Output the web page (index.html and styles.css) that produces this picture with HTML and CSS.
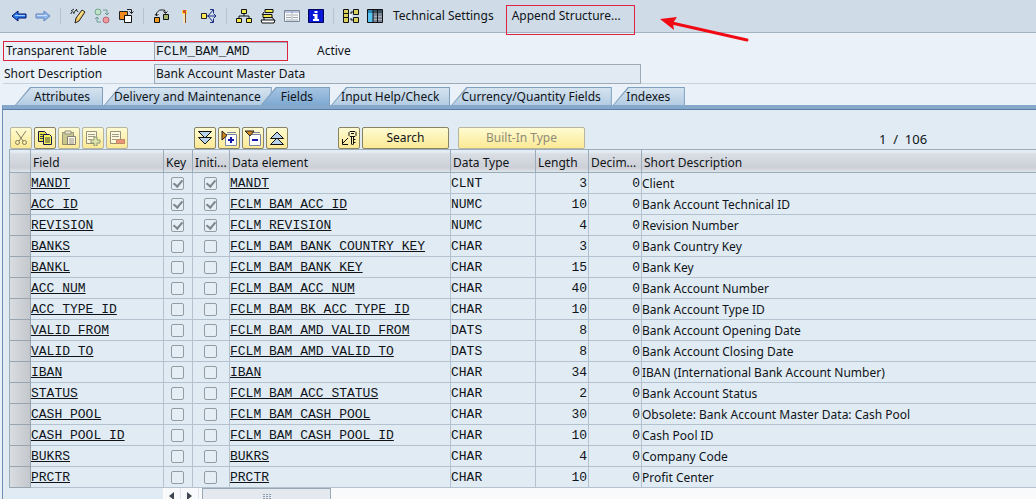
FILE: index.html
```html
<!DOCTYPE html>
<html lang="en">
<head>
<meta charset="utf-8">
<title>Transparent Table FCLM_BAM_AMD</title>
<link rel="stylesheet" href="styles.css">
</head>
<body>
<header class="toolbar">
  <button class="icon-btn" aria-label="Back"><svg viewBox="0 0 16 16"><path d="M1 8l6-5v3h8v4H7v3z" fill="#2f7be8" stroke="#00106b"/><path d="M4 7.500h10" stroke="#9fd0ff"/></svg></button>
  <button class="icon-btn" aria-label="Forward"><svg viewBox="0 0 16 16"><path d="M15 8L9 3v3H1v4h8v3z" fill="#8fb8ee" stroke="#6683bd"/><path d="M2 7.500h10" stroke="#c9e1ff"/></svg></button>
  <span class="sep"></span>
  <button class="icon-btn" aria-label="Display or change"><svg viewBox="0 0 16 16"><path d="M6 10l6-8 3 2-6 9-4 2z" fill="#f4c860" stroke="#222"/><path d="M8 10l5-7" stroke="#fff3b0"/><path d="M1 6c0-3 3-3 3 0M4 5c0-3 4-3 4-1M1 3l3-2M5 3l2-2" fill="none" stroke="#222"/></svg></button>
  <button class="icon-btn" aria-label="Active or inactive"><svg viewBox="0 0 16 16"><circle cx="4" cy="4" r="3" fill="#bfe3c9" stroke="#6fa68a"/><circle cx="12" cy="12" r="3" fill="#ef9aa0" stroke="#b56570"/><path d="M9 2h4v4m-2-1l2 2 2-2M7 14H3v-4m-2 1l2-2 2 2" fill="none" stroke="#6c9c91"/></svg></button>
  <button class="icon-btn" aria-label="Other object"><svg viewBox="0 0 16 16"><path d="M1.500 3.500h8v8h-8z" fill="#f08a1c" stroke="#222"/><path d="M6.500 7.500h7v7h-7z" fill="#fff" stroke="#111"/><path d="M9 1.500h4.500v4m-2-2l2 2 2-2" fill="none" stroke="#222"/></svg></button>
  <span class="sep"></span>
  <button class="icon-btn" aria-label="Check"><svg viewBox="0 0 16 16"><path d="M1.500 9.500h5v5h-5z" fill="#f49a20" stroke="#111"/><path d="M10.500 6.500h5v5h-5z" fill="#a8b56b" stroke="#111"/><path d="M3.500 8V5l3-3h5l1 3M2 6l1.500 2L5.500 6M10.500 3.500l2 2 2-2" fill="none" stroke="#222"/></svg></button>
  <button class="icon-btn" aria-label="Activate"><svg viewBox="0 0 16 16"><path d="M5 2h5v4H5z" fill="#ffd84a"/><path d="M6 2h3v3H6z" fill="#d94c28"/><path d="M6 6h3v9H6z" fill="#f6e5b8"/><path d="M8.500 5v10" stroke="#8b4a22"/></svg></button>
  <button class="icon-btn" aria-label="Where-used list"><svg viewBox="0 0 16 16"><path d="M.5 5.500h5v5h-5z" fill="#ffe95c" stroke="#222"/><path d="M6 8h9M7 8l5-6M7 8l5 6M12.500 5.500L15 8l-2.500 2.500M9 1.500h3.500V5M9 14.500h3.500V11" fill="none" stroke="#1d2d87"/></svg></button>
  <span class="sep"></span>
  <button class="icon-btn" aria-label="Hierarchy"><svg viewBox="0 0 16 16"><g fill="#f2e94a" stroke="#111"><path d="M5.500 1.500h5v4h-5zM.5 10.500h5v4h-5zM10.500 10.500h5v4h-5z"/></g><path d="M8 6v2M3 10V8h10v2" fill="none" stroke="#111"/></svg></button>
  <button class="icon-btn" aria-label="Append list"><svg viewBox="0 0 16 16"><g fill="#f2e94a" stroke="#111"><path d="M5 1.500h8v3H5zM3 6.500h9v3H3z"/><path d="M1 12h14l-1 3H2z" fill="#fff"/></g><path d="M4 4l-2 3M12 9l2 3M4 9v3" stroke="#111"/></svg></button>
  <button class="icon-btn" aria-label="Contents"><svg viewBox="0 0 16 16"><path d="M.5 2.500h15v11H.5z" fill="#fff" stroke="#7a8796"/><path d="M1 3h14v2H1z" fill="#b7c2e3"/><path d="M8 3v10M2 7h5m2 0h5M2 9.500h5m2 0h5M2 12h5m2 0h5" stroke="#9ba6ae"/></svg></button>
  <button class="icon-btn" aria-label="Information"><svg viewBox="0 0 16 16"><path d="M.5 1.500h15v13H.5z" fill="#0719d4" stroke="#00005e"/><path d="M6.500 3h3v2h-3zM5 6h4.500v5H11v2H5v-2h1.500V8H5z" fill="#fff"/></svg></button>
  <span class="sep"></span>
  <button class="icon-btn" aria-label="Graphic"><svg viewBox="0 0 16 16"><g fill="#d9d25c" stroke="#111"><path d="M.5 1.500h5v13h-5zM10.500 1.500h5v5h-5zM10.500 9.500h5v5h-5z"/></g><path d="M1 5.500h4M1 9.500h4M8 4h2M8 12h2M8 4v8" fill="none" stroke="#111"/><path d="M6 6h3v4H6z" fill="#e8f0ff"/></svg></button>
  <button class="icon-btn" aria-label="Table view"><svg viewBox="0 0 16 16"><path d="M.5 1.500h15v13H.5z" fill="#7a8693" stroke="#111"/><path d="M1 2h5v12H1z" fill="#5ac4f2"/><path d="M6 2h9v3H6z" fill="#39505f"/><path d="M1 2h5v3H1z" fill="#2a86b5"/><path d="M6 2v12M10.500 2v12" stroke="#111"/><path d="M7 8.500h3m1 0h4M7 11.500h3m1 0h4" stroke="#a9b3bd"/></svg></button>
  <button class="text-btn">Technical Settings</button>
  <button class="text-btn marked">Append Structure...</button>
  <svg class="arrow" viewBox="0 0 92 28" aria-hidden="true"><path d="M12 7l75 17" stroke="#f00a14" stroke-width="3" stroke-linecap="round"/><path d="M0 3l17-2-4 6 1 7z" fill="#f00a14"/></svg>
</header>
<main>
  <section class="details">
    <div class="detail framed">
      <label class="caption" for="table">Transparent Table</label>
      <input class="name mono" id="table" value="FCLM_BAM_AMD" readonly>
    </div>
    <span class="status">Active</span>
    <div class="detail second">
      <label class="caption" for="description">Short Description</label>
      <input class="description" id="description" value="Bank Account Master Data" readonly>
    </div>
  </section>
  <nav class="tabs">
    <button class="tab first"><span>Attributes</span></button>
    <button class="tab"><span>Delivery and Maintenance</span></button>
    <button class="tab selected"><span>Fields</span></button>
    <button class="tab"><span>Input Help/Check</span></button>
    <button class="tab"><span>Currency/Quantity Fields</span></button>
    <button class="tab"><span>Indexes</span></button>
  </nav>
  <section class="panel">
    <div class="actions">
      <div class="group edit">
        <button class="tool off" aria-label="Cut"><svg viewBox="0 0 16 16"><path d="M3 1l7 10M13 1L6 11" stroke="#222"/><circle cx="4.500" cy="12.500" r="2" fill="none" stroke="#222"/><circle cx="11.500" cy="12.500" r="2" fill="none" stroke="#222"/></svg></button>
        <button class="tool" aria-label="Copy"><svg viewBox="0 0 16 16"><path d="M1.500 1.500h6l2 2v8h-8z" fill="#e7e843" stroke="#15154d"/><path d="M6.500 4.500h6l2 2v8h-8z" fill="#f5f458" stroke="#15154d"/><path d="M3 4.500h3M3 6.500h3M3 8.500h3M8 8h5M8 10h5M8 12h5" stroke="#444"/></svg></button>
        <button class="tool off" aria-label="Paste"><svg viewBox="0 0 16 16"><path d="M1.500 2.500h11v12h-11z" fill="#9fa574" stroke="#444"/><path d="M4 1h6v3H4z" fill="#ddd" stroke="#444"/><path d="M6.500 6.500h8v8h-8z" fill="#fff" stroke="#224"/><path d="M8 9h5M8 11h5M8 13h5" stroke="#448"/></svg></button>
        <button class="tool off" aria-label="Insert row"><svg viewBox="0 0 16 16"><path d="M1.500 1.500h10v12h-10z" fill="#fff" stroke="#444"/><path d="M3 4.500h7M3 6.500h7M3 9.500h4" stroke="#555"/><path d="M9 7h3v3h3v3h-3v3H9v-3H6v-3h3z" fill="#c5dcb0" stroke="#354"/></svg></button>
        <button class="tool off" aria-label="Delete row"><svg viewBox="0 0 16 16"><path d="M1.500 1.500h10v12h-10z" fill="#fff" stroke="#444"/><path d="M3 4.500h7M3 6.500h7M3 9.500h4" stroke="#555"/><path d="M7.500 9.500h8v4h-8z" fill="#d9504d" stroke="#943232"/></svg></button>
      </div>
      <div class="group expand">
        <button class="tool" aria-label="Expand all"><svg viewBox="0 0 16 16"><path d="M1.500 1.500h13L8 8zM1.500 7.500h13L8 14z" fill="#b9d2ec" stroke="#111"/></svg></button>
        <button class="tool" aria-label="Expand"><svg viewBox="0 0 16 16"><path d="M4.500 4.500h11v11h-11zM6 2.500h9" fill="#fff" stroke="#7785a8"/><path d="M1 1v9l5-4.500z" fill="#d48618" stroke="#222"/><path d="M7 10h6M10 7v6" stroke="#1717a8" stroke-width="2"/></svg></button>
        <button class="tool" aria-label="Collapse"><svg viewBox="0 0 16 16"><path d="M4.500 4.500h11v11h-11zM8 2.500h7" fill="#fff" stroke="#7785a8"/><path d="M0 1h9L5 6z" fill="#d48618" stroke="#222"/><path d="M7 10h6" stroke="#1717a8" stroke-width="2"/></svg></button>
        <button class="tool" aria-label="Collapse all"><svg viewBox="0 0 16 16"><path d="M1.500 8.500L8 2l6.500 6.500zM1.500 14.500L8 8l6.500 6.500z" fill="#b9d2ec" stroke="#111"/></svg></button>
      </div>
      <div class="group find">
        <button class="tool" aria-label="Foreign keys"><svg viewBox="0 0 16 16"><path d="M9 1.500h5l1 1v3l-1 1H9l-1-1v-3zM10 3.500h3M10.500 7v7l1 1 1-1V7M13 9.500h1.500M13 12.500h1.500M7 8l-6 6M1.500 9v5.500H7" fill="none" stroke="#111"/></svg></button>
        <button class="wide search">Search</button>
        <button class="wide type" disabled>Built-In Type</button>
      </div>
      <output class="counter">1 &nbsp;/ &nbsp;106</output>
    </div>
    <table class="grid">
      <colgroup><col class="c-sel"><col class="c-field"><col class="c-key"><col class="c-init"><col class="c-elem"><col class="c-type"><col class="c-len"><col class="c-dec"><col></colgroup>
      <thead><tr><th></th><th>Field</th><th>Key</th><th>Initi...</th><th>Data element</th><th>Data Type</th><th>Length</th><th>Decim...</th><th>Short Description</th></tr></thead>
      <tbody>
        <tr><th></th><td><a href="#">MANDT</a></td><td><input type="checkbox" aria-label="Key" checked></td><td><input type="checkbox" aria-label="Initial" checked></td><td><a href="#">MANDT</a></td><td>CLNT</td><td>3</td><td>0</td><td>Client</td></tr>
        <tr><th></th><td><a href="#">ACC_ID</a></td><td><input type="checkbox" aria-label="Key" checked></td><td><input type="checkbox" aria-label="Initial" checked></td><td><a href="#">FCLM_BAM_ACC_ID</a></td><td>NUMC</td><td>10</td><td>0</td><td>Bank Account Technical ID</td></tr>
        <tr><th></th><td><a href="#">REVISION</a></td><td><input type="checkbox" aria-label="Key" checked></td><td><input type="checkbox" aria-label="Initial" checked></td><td><a href="#">FCLM_REVISION</a></td><td>NUMC</td><td>4</td><td>0</td><td>Revision Number</td></tr>
        <tr><th></th><td><a href="#">BANKS</a></td><td><input type="checkbox" aria-label="Key"></td><td><input type="checkbox" aria-label="Initial"></td><td><a href="#">FCLM_BAM_BANK_COUNTRY_KEY</a></td><td>CHAR</td><td>3</td><td>0</td><td>Bank Country Key</td></tr>
        <tr><th></th><td><a href="#">BANKL</a></td><td><input type="checkbox" aria-label="Key"></td><td><input type="checkbox" aria-label="Initial"></td><td><a href="#">FCLM_BAM_BANK_KEY</a></td><td>CHAR</td><td>15</td><td>0</td><td>Bank Key</td></tr>
        <tr><th></th><td><a href="#">ACC_NUM</a></td><td><input type="checkbox" aria-label="Key"></td><td><input type="checkbox" aria-label="Initial"></td><td><a href="#">FCLM_BAM_ACC_NUM</a></td><td>CHAR</td><td>40</td><td>0</td><td>Bank Account Number</td></tr>
        <tr><th></th><td><a href="#">ACC_TYPE_ID</a></td><td><input type="checkbox" aria-label="Key"></td><td><input type="checkbox" aria-label="Initial"></td><td><a href="#">FCLM_BAM_BK_ACC_TYPE_ID</a></td><td>CHAR</td><td>10</td><td>0</td><td>Bank Account Type ID</td></tr>
        <tr><th></th><td><a href="#">VALID_FROM</a></td><td><input type="checkbox" aria-label="Key"></td><td><input type="checkbox" aria-label="Initial"></td><td><a href="#">FCLM_BAM_AMD_VALID_FROM</a></td><td>DATS</td><td>8</td><td>0</td><td>Bank Account Opening Date</td></tr>
        <tr><th></th><td><a href="#">VALID_TO</a></td><td><input type="checkbox" aria-label="Key"></td><td><input type="checkbox" aria-label="Initial"></td><td><a href="#">FCLM_BAM_AMD_VALID_TO</a></td><td>DATS</td><td>8</td><td>0</td><td>Bank Account Closing Date</td></tr>
        <tr><th></th><td><a href="#">IBAN</a></td><td><input type="checkbox" aria-label="Key"></td><td><input type="checkbox" aria-label="Initial"></td><td><a href="#">IBAN</a></td><td>CHAR</td><td>34</td><td>0</td><td>IBAN (International Bank Account Number)</td></tr>
        <tr><th></th><td><a href="#">STATUS</a></td><td><input type="checkbox" aria-label="Key"></td><td><input type="checkbox" aria-label="Initial"></td><td><a href="#">FCLM_BAM_ACC_STATUS</a></td><td>CHAR</td><td>2</td><td>0</td><td>Bank Account Status</td></tr>
        <tr><th></th><td><a href="#">CASH_POOL</a></td><td><input type="checkbox" aria-label="Key"></td><td><input type="checkbox" aria-label="Initial"></td><td><a href="#">FCLM_BAM_CASH_POOL</a></td><td>CHAR</td><td>30</td><td>0</td><td>Obsolete: Bank Account Master Data: Cash Pool</td></tr>
        <tr><th></th><td><a href="#">CASH_POOL_ID</a></td><td><input type="checkbox" aria-label="Key"></td><td><input type="checkbox" aria-label="Initial"></td><td><a href="#">FCLM_BAM_CASH_POOL_ID</a></td><td>CHAR</td><td>10</td><td>0</td><td>Cash Pool ID</td></tr>
        <tr><th></th><td><a href="#">BUKRS</a></td><td><input type="checkbox" aria-label="Key"></td><td><input type="checkbox" aria-label="Initial"></td><td><a href="#">BUKRS</a></td><td>CHAR</td><td>4</td><td>0</td><td>Company Code</td></tr>
        <tr><th></th><td><a href="#">PRCTR</a></td><td><input type="checkbox" aria-label="Key"></td><td><input type="checkbox" aria-label="Initial"></td><td><a href="#">PRCTR</a></td><td>CHAR</td><td>10</td><td>0</td><td>Profit Center</td></tr>
      </tbody>
    </table>
    <div class="scroll">
      <button class="step" aria-label="Scroll left"><svg viewBox="0 0 5 8"><path d="M5 0v8L0 4z" fill="#3c4650"/></svg></button>
      <button class="step" aria-label="Scroll right"><svg viewBox="0 0 5 8"><path d="M0 0v8l5-4z" fill="#3c4650"/></svg></button>
      <div class="thumb"><svg viewBox="0 0 8 5"><path d="M0 .5h2m1 0h2m1 0h2M0 2.500h2m1 0h2m1 0h2M0 4.500h2m1 0h2m1 0h2" stroke="#8f9fae"/></svg></div>
    </div>
  </section>
</main>
</body>
</html>
```

FILE: styles.css
```css
* { box-sizing: border-box; }

body {
  margin: 0;
  min-height: 100vh;
  overflow: hidden;
  background: #eaf1f8;
  color: #101418;
  font: 12px/16px "Noto Sans", "Open Sans", sans-serif;
}

button, input { font: inherit; color: inherit; }
button { padding: 0; border: 0; background: none; white-space: nowrap; }
svg { display: block; }

.mono, .grid td { font-family: "Liberation Mono", monospace; font-size: 13px; }

.toolbar {
  position: relative;
  display: flex;
  align-items: center;
  gap: 8px;
  height: 33px;
  padding: 0 10px 0 11px;
  border-bottom: 1px solid #a3b3c2;
  background: #cfdce8;
}
.icon-btn, .icon-btn svg { width: 16px; height: 16px; }
.icon-btn { flex: none; }
.sep { width: 1px; height: 16px; margin: 0 1px; background: #b5c3d0; }
.text-btn { margin-left: 2px; height: 30px; }
.marked { align-self: flex-start; margin: 5px 0 0 4px; padding: 0 13px 8px 5px; border: 1px solid #dc2440; }
.arrow { position: absolute; left: 660px; top: 16px; width: 92px; height: 28px; z-index: 3; }

.details {
  display: grid;
  grid-template-columns: 285px 1fr;
  row-gap: 3px;
  padding: 8px 0 3px 3px;
}
.detail { display: flex; align-items: center; height: 20px; }
.framed { border: 1px solid #dc2440; }
.framed .caption { flex: 0 0 150px; padding-left: 2px; }
.caption { flex: 0 0 151px; padding-left: 1px; }
.second { grid-column: 1 / -1; border-bottom: 1px solid #c6d2dc; }
.status { padding: 2px 0 0 29px; }
.name, .description {
  height: 18px;
  padding: 0 1px;
  border: 1px solid #9da9b5;
  background: #e1eaf2;
  outline: 0;
}
.name { flex: 1; min-width: 0; border-width: 1px 0 0 1px; }
.description { width: 487px; height: 20px; }

.tabs { display: flex; padding-left: 15px; height: 18px; }
.tab {
  position: relative;
  min-width: 72px;
  padding: 0 11px 0 10px;
  margin-right: 1px;
  background: #7f9fbe;
  clip-path: polygon(15px 0, 100% 0, 100% 100%, 0 100%);
}
.tab::before {
  content: "";
  position: absolute;
  inset: 1px 1px 0 1px;
  background: linear-gradient(#d5e3ef, #b3cce3);
  clip-path: polygon(15px 0, 100% 0, 100% 100%, 0 100%);
}
.tab span { position: relative; display: block; padding-top: 2px; }
.tab.first { padding: 0 13px 0 19px; }
.tab.selected { z-index: 1; min-width: 0; margin-left: -12px; padding: 0 17px 0 20px; }
.tab.selected::before { background: linear-gradient(#a5c4e2, #7fa9d2); }

.panel {
  margin-left: 2px;
  border-top: 4px solid #86a8cb;
  border-left: 1px solid #6c90b6;
  background: #e0ebf4;
  box-shadow: inset 0 1px #587da6;
}
.actions { display: flex; align-items: flex-end; height: 40px; padding-left: 7px; }
.group { display: flex; gap: 2px; }
.expand { margin-left: 66px; }
.find { margin-left: 50px; }
.tool, .wide {
  height: 22px;
  border: 1px solid #8a8265;
  border-radius: 2px;
  background: linear-gradient(#fffbd2, #fbe995);
}
.tool { display: grid; place-items: center; width: 22px; }
.tool svg { width: 16px; height: 16px; }
.off { border-color: #b8b59d; }
.off svg { opacity: .55; }
.search { width: 87px; }
.type { width: 127px; margin-left: 7px; border-color: #b8b59d; color: #8f8c78; }
.counter { margin-left: 294px; padding-bottom: 2px; font-size: 13px; }

.grid {
  width: calc(100% - 6px);
  margin-left: 6px;
  table-layout: fixed;
  border-collapse: separate;
  border-spacing: 0;
  border-top: 1px solid #9aabba;
  border-left: 1px solid #9aabba;
}
.c-sel { width: 21px; }
.c-field { width: 133px; }
.c-key { width: 29px; }
.c-init { width: 37px; }
.c-elem { width: 221px; }
.c-type { width: 85px; }
.c-len { width: 53px; }
.c-dec { width: 53px; }
.grid th, .grid td {
  height: 21px;
  padding: 1px 1px 0;
  border-right: 1px solid #b4c2d0;
  border-bottom: 1px solid #b4c2d0;
  font-weight: normal;
  line-height: 16px;
  text-align: left;
  white-space: nowrap;
  overflow: hidden;
}
.grid td { padding-left: 0; }
.grid thead th {
  height: 23px;
  padding: 3px 2px 0;
  border-color: #9aabba;
  background: linear-gradient(#e4edf5 2px, #d9dee4 4px, #cdd1d7 80%, #dfe4e9);
}
.grid tbody th { background: linear-gradient(90deg, #d9dde2, #c4c8cd); border-color: #98a4af; }
.grid tr > :last-child { border-right: 0; }
.grid td:nth-child(3), .grid td:nth-child(4) { text-align: center; }
.grid td:nth-child(7), .grid td:nth-child(8) { text-align: right; }
.grid td:last-child { font: 12px/16px "Noto Sans", "Open Sans", sans-serif; }
.grid a { color: inherit; text-decoration: underline; text-underline-offset: 1px; text-decoration-skip-ink: none; }
.grid input {
  appearance: none;
  display: inline-grid;
  place-items: center;
  width: 13px;
  height: 13px;
  margin: 0;
  border: 1px solid #929ca5;
  border-radius: 2px;
  background: #e6eef5;
  vertical-align: middle;
}
.grid input:checked::after {
  content: "";
  width: 4px;
  height: 7px;
  margin-bottom: 2px;
  border: solid #7d868e;
  border-width: 0 2px 2px 0;
  transform: rotate(40deg);
}

.scroll { display: flex; height: 16px; margin-left: 160px; background: #f8fafc; }
.step { display: grid; place-items: center; width: 18px; height: 15px; border-right: 1px solid #e0e6ec; }
.step svg { width: 5px; height: 8px; }
.thumb { display: grid; place-items: center; width: 129px; height: 16px; margin-left: 3px; border: 1px solid #9aa8b5; background: #e3e9ef; }
.thumb svg { width: 8px; height: 5px; }
```
